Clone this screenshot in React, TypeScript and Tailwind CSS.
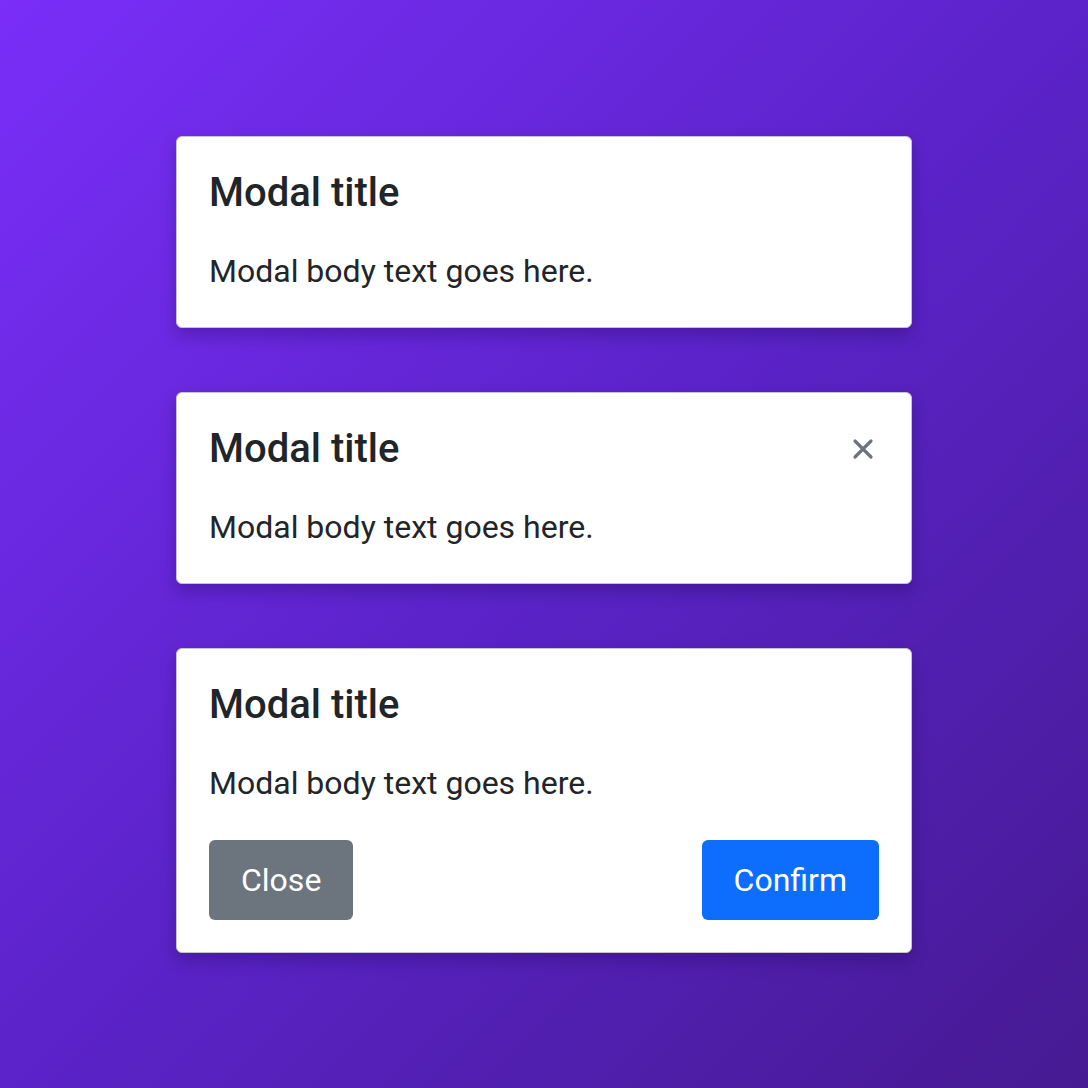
import React from "react";

function CloseIcon() {
    return (
        <svg width="22" height="22" viewBox="0 0 22 22" fill="none">
            <path d="M3 3L19 19M19 3L3 19" stroke="#6c757d" strokeWidth="3.2" strokeLinecap="round" />
        </svg>
    );
}

function ModalCard({ dismissible = false, footer = false }: { dismissible?: boolean; footer?: boolean }) {
    return (
        <div className="w-[736px] bg-white border border-[#c4c4cc] rounded-[6px] shadow-[0_8px_16px_rgba(20,0,60,0.25)] p-8">
            <div className="flex items-center justify-between h-[48px]">
                <h5 className="text-[40px] leading-[48px] font-medium text-[#212529]">Modal title</h5>
                {dismissible && (
                    <button className="w-[48px] h-[48px] flex items-center justify-center mr-[-8px]">
                        <CloseIcon />
                    </button>
                )}
            </div>
            <p className="mt-[30px] text-[32px] leading-[48px] text-[#212529]">Modal body text goes here.</p>
            {footer && (
                <div className="flex justify-between mt-[33px]">
                    <button className="h-[80px] px-8 rounded-[6px] bg-[#6c757d] text-white text-[32px]">Close</button>
                    <button className="h-[80px] px-8 rounded-[6px] bg-[#0d6efd] text-white text-[32px]">Confirm</button>
                </div>
            )}
        </div>
    );
}

export default function App() {
    return (
        <div
            className="w-[1088px] h-[1088px] flex flex-col items-center justify-center gap-16 bg-[linear-gradient(135deg,#7a2ef8_0%,#5b23c9_50%,#461a92_100%)]"
            style={{ fontFamily: "Roboto, 'Liberation Sans', sans-serif" }}
        >
            <ModalCard />
            <ModalCard dismissible />
            <ModalCard footer />
        </div>
    );
}
